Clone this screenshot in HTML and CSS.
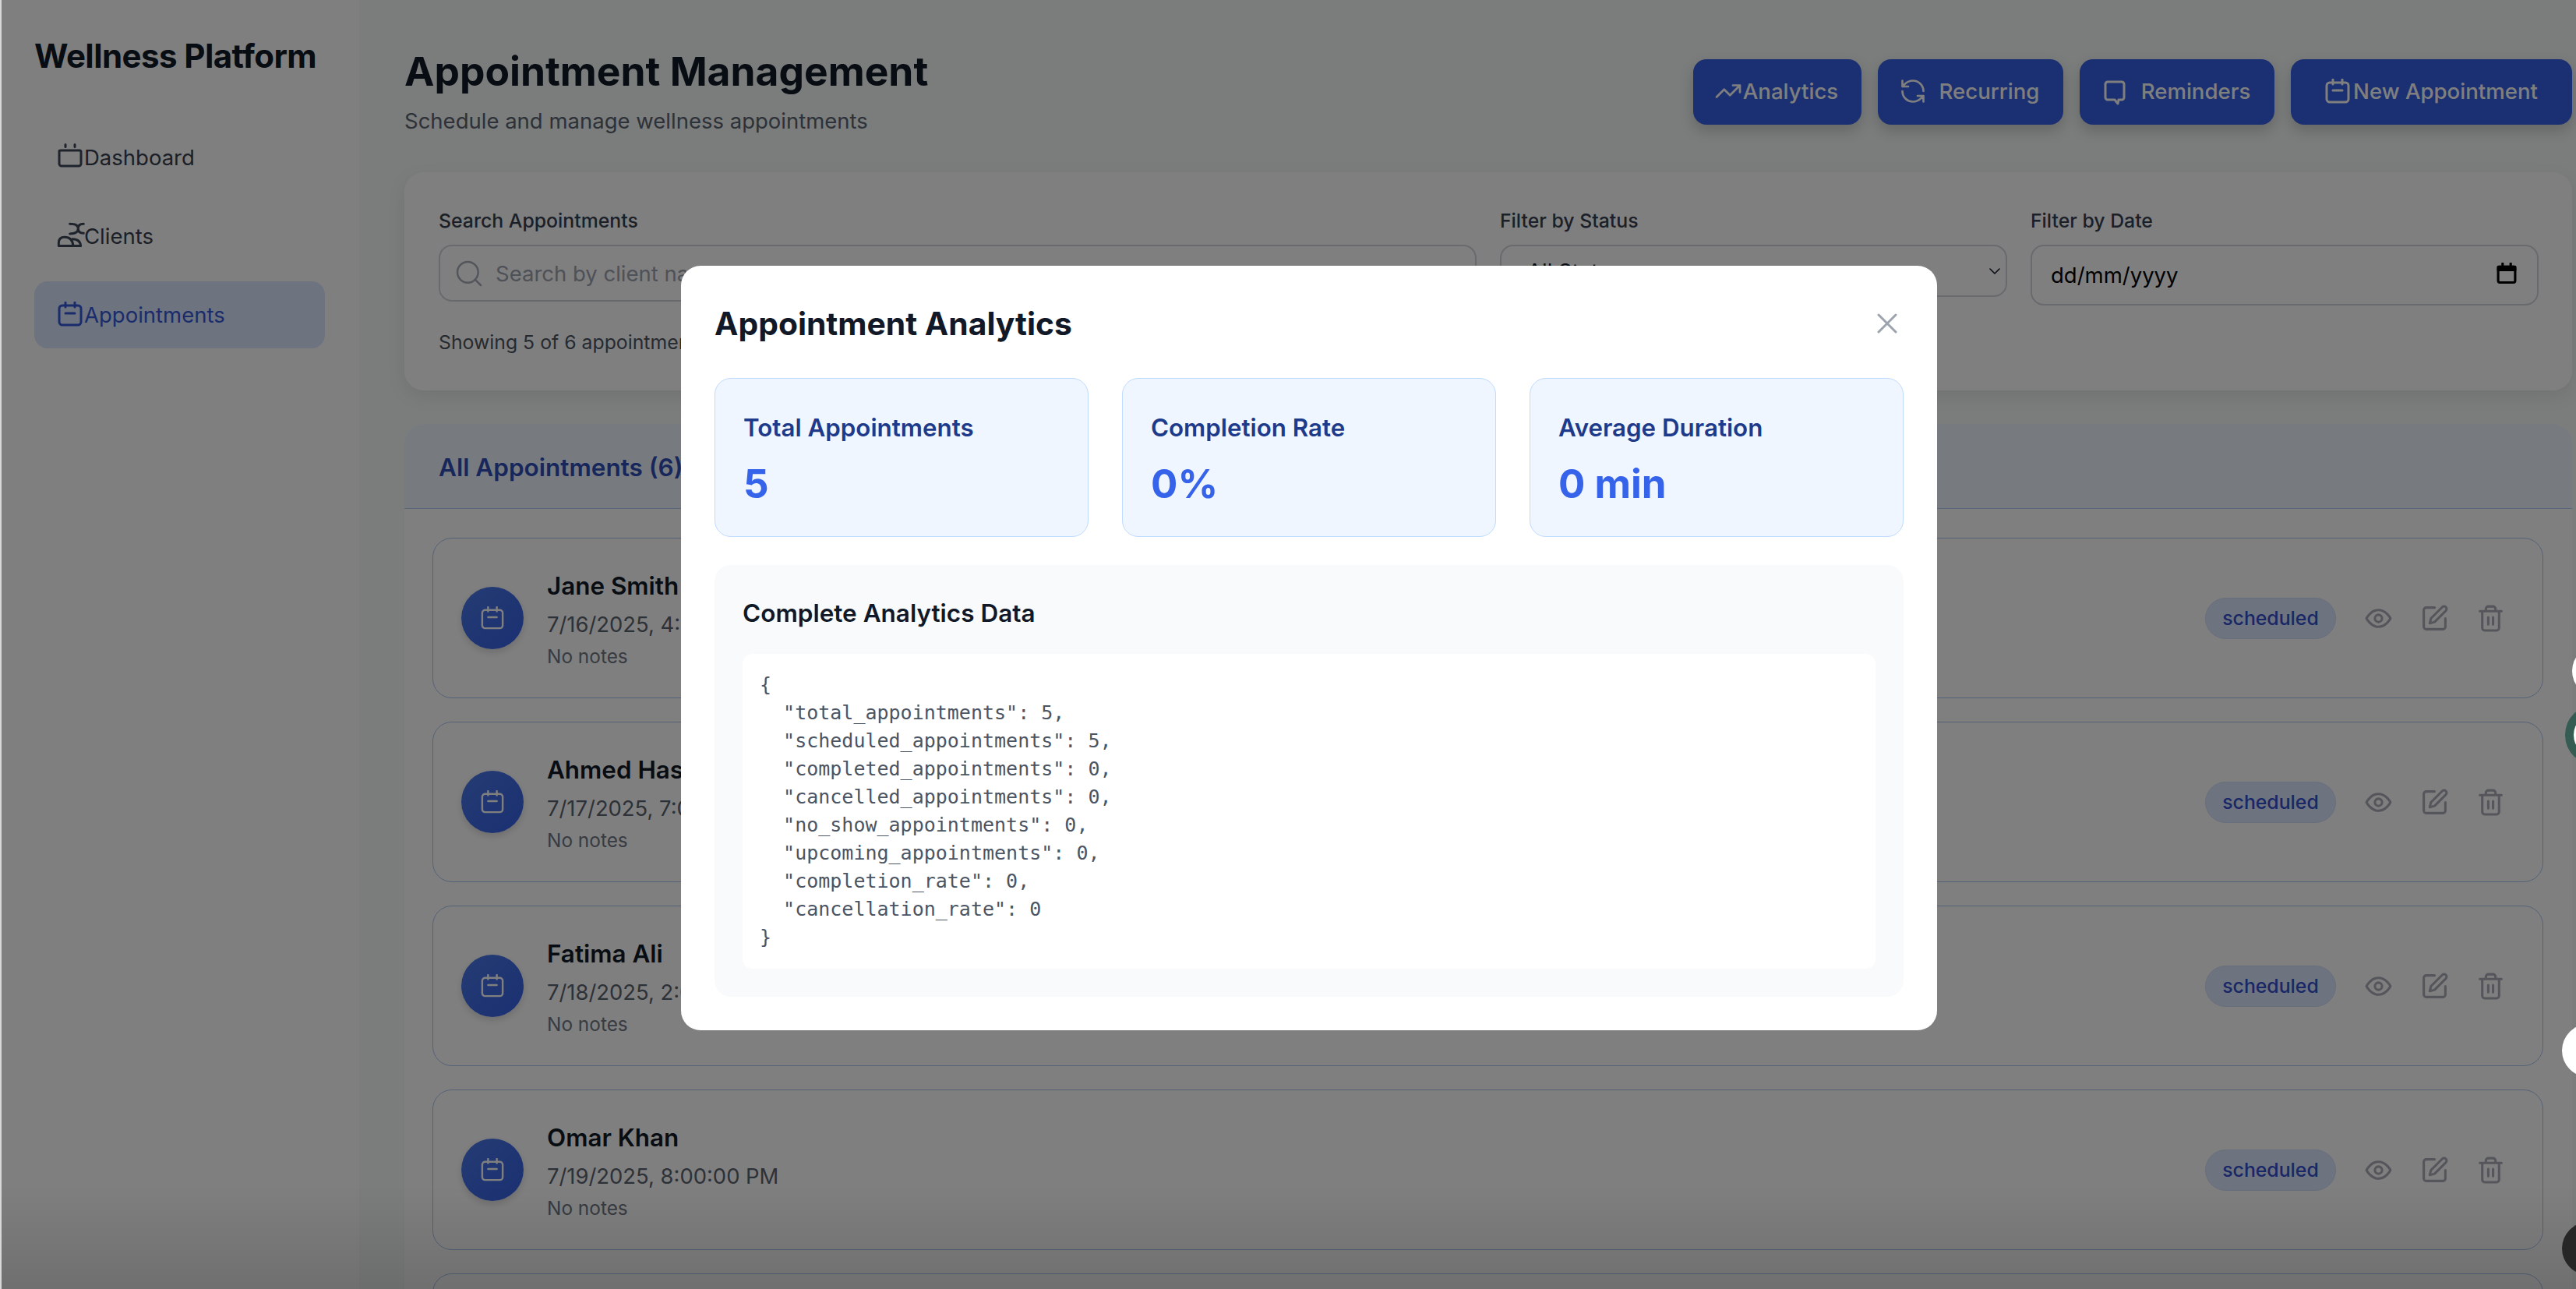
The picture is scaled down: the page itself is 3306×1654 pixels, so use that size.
FILE: index.html
```html
<!DOCTYPE html>
<html lang="en">
<head>
    <meta charset="UTF-8">
    <title>Wellness Platform - Appointments</title>
    <link rel="stylesheet" href="styles.css">
</head>
<body>
    <svg class="icon-defs" width="0" height="0">
        <defs>
            <symbol id="cal" viewBox="0 0 32 32">
                <rect x="2" y="5" width="28" height="25" rx="4"></rect>
                <path d="M10 1v6M22 1v6M10 15h12"></path>
            </symbol>
        </defs>
    </svg>

    <div class="app">
        <aside class="sidebar">
            <h2 class="brand">Wellness Platform</h2>
            <nav class="nav">
                <a class="nav-item">
                    <svg class="nav-icon" viewBox="0 0 32 32"><path d="M2 9.500 4 9h24.500a2 2 0 0 1 1.500 2v15a3 3 0 0 1-3 3H5a3 3 0 0 1-3-3zM10 1.500v3M22 1.500v3"></path></svg>
                    <span>Dashboard</span>
                </a>
                <a class="nav-item">
                    <svg class="nav-icon nav-icon-clients" viewBox="40 345 110 100"><path d="M47 437h85M47 437v-12q0-22 23-22 30 0 33 34M100 410q30 0 32 27M90 352q32 0 32 18 0 20-32 20M143 352q-21 0-21 18 0 18 21 18"></path></svg>
                    <span>Clients</span>
                </a>
                <a class="nav-item nav-item-active">
                    <svg class="nav-icon"><use href="#cal"></use></svg>
                    <span>Appointments</span>
                </a>
            </nav>
        </aside>

        <main class="main">
            <header class="page-head">
                <div>
                    <h1 class="page-title">Appointment Management</h1>
                    <p class="page-sub">Schedule and manage wellness appointments</p>
                </div>
                <div class="head-actions">
                    <button class="btn btn-analytics">
                        <svg class="btn-icon" viewBox="0 0 24 24"><path d="M22 7l-8.500 8.500-5-5L2 17M16 7h6v6"></path></svg>
                        <span>Analytics</span>
                    </button>
                    <button class="btn btn-recurring">
                        <svg class="btn-icon" viewBox="0 0 24 24"><path d="M21 12a9 9 0 0 0-9-9 9.750 9.750 0 0 0-6.740 2.740L3 8M3 3v5h5M3 12a9 9 0 0 0 9 9 9.750 9.750 0 0 0 6.740-2.740L21 16M16 16h5v5"></path></svg>
                        <span>Recurring</span>
                    </button>
                    <button class="btn btn-reminders">
                        <svg class="btn-icon-bubble" viewBox="0 0 28 32"><path d="M5 2h18a3 3 0 0 1 3 3v17a3 3 0 0 1-3 3h-4l-1 5-4-5H5a3 3 0 0 1-3-3V5a3 3 0 0 1 3-3z"></path></svg>
                        <span>Reminders</span>
                    </button>
                    <button class="btn btn-new">
                        <svg class="btn-icon-cal"><use href="#cal"></use></svg>
                        <span>New Appointment</span>
                    </button>
                </div>
            </header>

            <section class="filter-card">
                <div class="filter-grid">
                    <div>
                        <label class="field-label">Search Appointments</label>
                        <div class="search-box">
                            <svg class="search-icon" viewBox="0 0 24 24"><circle cx="11" cy="11" r="8"></circle><path d="M21 21l-4.300-4.300"></path></svg>
                            <span class="placeholder">Search by client name or notes...</span>
                        </div>
                    </div>
                    <div>
                        <label class="field-label">Filter by Status</label>
                        <div class="select-box">
                            <span>All Status</span>
                            <svg class="chevron" viewBox="0 0 16 10"><path d="M2 2l6 6 6-6"></path></svg>
                        </div>
                    </div>
                    <div>
                        <label class="field-label">Filter by Date</label>
                        <div class="date-box">
                            <span>dd/mm/yyyy</span>
                            <svg class="date-icon" viewBox="0 0 24 26"><rect x="1.500" y="5" width="21" height="19.500" rx="2"></rect><path class="date-head" d="M1.500 5h21v4h-21zM7 1v4M17 1v4"></path></svg>
                        </div>
                    </div>
                </div>
                <p class="filter-count">Showing 5 of 6 appointments</p>
            </section>

            <section class="list-card">
                <div class="list-head">All Appointments (6)</div>
                <div class="list-body">
                    <article class="appt">
                        <div class="appt-avatar"><svg class="avatar-icon"><use href="#cal"></use></svg></div>
                        <div class="appt-info">
                            <div class="appt-name">Jane Smith</div>
                            <div class="appt-date">7/16/2025, 4:00:00 PM</div>
                            <div class="appt-notes">No notes</div>
                        </div>
                        <span class="badge">scheduled</span>
                        <div class="appt-actions">
                            <svg class="act-icon" viewBox="0 0 24 24"><path d="M2 12s3.600-7 10-7 10 7 10 7-3.600 7-10 7-10-7-10-7z"></path><circle cx="12" cy="12" r="3"></circle></svg>
                            <svg class="act-icon" viewBox="0 0 24 24"><path d="M12 3H5a2 2 0 0 0-2 2v14a2 2 0 0 0 2 2h14a2 2 0 0 0 2-2v-7"></path><path d="M18.400 2.600a2.100 2.100 0 1 1 3 3L12 15l-4 1 1-4z"></path></svg>
                            <svg class="act-icon" viewBox="0 0 24 24"><path d="M3 6h18M19 6v14a2 2 0 0 1-2 2H7a2 2 0 0 1-2-2V6M8 6V4a2 2 0 0 1 2-2h4a2 2 0 0 1 2 2v2M10 11v6M14 11v6"></path></svg>
                        </div>
                    </article>
                    <article class="appt">
                        <div class="appt-avatar"><svg class="avatar-icon"><use href="#cal"></use></svg></div>
                        <div class="appt-info">
                            <div class="appt-name">Ahmed Hassan</div>
                            <div class="appt-date">7/17/2025, 7:00:00 PM</div>
                            <div class="appt-notes">No notes</div>
                        </div>
                        <span class="badge">scheduled</span>
                        <div class="appt-actions">
                            <svg class="act-icon" viewBox="0 0 24 24"><path d="M2 12s3.600-7 10-7 10 7 10 7-3.600 7-10 7-10-7-10-7z"></path><circle cx="12" cy="12" r="3"></circle></svg>
                            <svg class="act-icon" viewBox="0 0 24 24"><path d="M12 3H5a2 2 0 0 0-2 2v14a2 2 0 0 0 2 2h14a2 2 0 0 0 2-2v-7"></path><path d="M18.400 2.600a2.100 2.100 0 1 1 3 3L12 15l-4 1 1-4z"></path></svg>
                            <svg class="act-icon" viewBox="0 0 24 24"><path d="M3 6h18M19 6v14a2 2 0 0 1-2 2H7a2 2 0 0 1-2-2V6M8 6V4a2 2 0 0 1 2-2h4a2 2 0 0 1 2 2v2M10 11v6M14 11v6"></path></svg>
                        </div>
                    </article>
                    <article class="appt">
                        <div class="appt-avatar"><svg class="avatar-icon"><use href="#cal"></use></svg></div>
                        <div class="appt-info">
                            <div class="appt-name">Fatima Ali</div>
                            <div class="appt-date">7/18/2025, 2:00:00 PM</div>
                            <div class="appt-notes">No notes</div>
                        </div>
                        <span class="badge">scheduled</span>
                        <div class="appt-actions">
                            <svg class="act-icon" viewBox="0 0 24 24"><path d="M2 12s3.600-7 10-7 10 7 10 7-3.600 7-10 7-10-7-10-7z"></path><circle cx="12" cy="12" r="3"></circle></svg>
                            <svg class="act-icon" viewBox="0 0 24 24"><path d="M12 3H5a2 2 0 0 0-2 2v14a2 2 0 0 0 2 2h14a2 2 0 0 0 2-2v-7"></path><path d="M18.400 2.600a2.100 2.100 0 1 1 3 3L12 15l-4 1 1-4z"></path></svg>
                            <svg class="act-icon" viewBox="0 0 24 24"><path d="M3 6h18M19 6v14a2 2 0 0 1-2 2H7a2 2 0 0 1-2-2V6M8 6V4a2 2 0 0 1 2-2h4a2 2 0 0 1 2 2v2M10 11v6M14 11v6"></path></svg>
                        </div>
                    </article>
                    <article class="appt">
                        <div class="appt-avatar"><svg class="avatar-icon"><use href="#cal"></use></svg></div>
                        <div class="appt-info">
                            <div class="appt-name">Omar Khan</div>
                            <div class="appt-date">7/19/2025, 8:00:00 PM</div>
                            <div class="appt-notes">No notes</div>
                        </div>
                        <span class="badge">scheduled</span>
                        <div class="appt-actions">
                            <svg class="act-icon" viewBox="0 0 24 24"><path d="M2 12s3.600-7 10-7 10 7 10 7-3.600 7-10 7-10-7-10-7z"></path><circle cx="12" cy="12" r="3"></circle></svg>
                            <svg class="act-icon" viewBox="0 0 24 24"><path d="M12 3H5a2 2 0 0 0-2 2v14a2 2 0 0 0 2 2h14a2 2 0 0 0 2-2v-7"></path><path d="M18.400 2.600a2.100 2.100 0 1 1 3 3L12 15l-4 1 1-4z"></path></svg>
                            <svg class="act-icon" viewBox="0 0 24 24"><path d="M3 6h18M19 6v14a2 2 0 0 1-2 2H7a2 2 0 0 1-2-2V6M8 6V4a2 2 0 0 1 2-2h4a2 2 0 0 1 2 2v2M10 11v6M14 11v6"></path></svg>
                        </div>
                    </article>
                    <article class="appt"></article>
                </div>
            </section>
        </main>
    </div>

    <div class="overlay">
        <div class="modal">
            <div class="modal-head">
                <h2 class="modal-title">Appointment Analytics</h2>
                <svg class="modal-close" viewBox="0 0 26 26"><path d="M2 2l22 22M24 2L2 24"></path></svg>
            </div>
            <div class="stat-grid">
                <div class="stat">
                    <div class="stat-label">Total Appointments</div>
                    <div class="stat-value">5</div>
                </div>
                <div class="stat">
                    <div class="stat-label">Completion Rate</div>
                    <div class="stat-value">0%</div>
                </div>
                <div class="stat">
                    <div class="stat-label">Average Duration</div>
                    <div class="stat-value">0 min</div>
                </div>
            </div>
            <div class="data-panel">
                <h3 class="data-title">Complete Analytics Data</h3>
                <pre class="data-code">{
  "total_appointments": 5,
  "scheduled_appointments": 5,
  "completed_appointments": 0,
  "cancelled_appointments": 0,
  "no_show_appointments": 0,
  "upcoming_appointments": 0,
  "completion_rate": 0,
  "cancellation_rate": 0
}</pre>
            </div>
        </div>
    </div>

    <!-- floating widgets that stick out from the right edge -->
    <div class="float-dot dot-white-a"></div>
    <div class="float-dot dot-green"></div>
    <div class="float-dot dot-white-b"></div>
    <div class="float-dot dot-dark"></div>
</body>
</html>
```

FILE: styles.css
```css
* {
    box-sizing: border-box;
}

html, body {
    margin: 0;
    height: 100%;
    overflow: hidden;
}

body {
    font-family: "Inter", "Liberation Sans", sans-serif;
    background-color: #f6faf8;
    color: #111827;
}

.icon-defs {
    position: absolute;
}

svg {
    fill: none;
    stroke: currentColor;
    stroke-linecap: round;
    stroke-linejoin: round;
    flex-shrink: 0;
}

.app {
    display: flex;
    height: 100%;
}

/* sidebar */
.sidebar {
    width: 461px;
    flex-shrink: 0;
    padding: 44px;
    background-color: #fff;
}

.brand {
    margin: 0 0 59px;
    font-size: 42px;
    line-height: 56px;
    font-weight: 700;
    letter-spacing: -0.57px;
}

.nav {
    display: flex;
    flex-direction: column;
    gap: 15px;
}

.nav-item {
    display: flex;
    align-items: center;
    gap: 2px;
    height: 86px;
    padding-left: 30px;
    border-radius: 17px;
    font-size: 27.5px;
    color: #374151;
}

.nav-item-active {
    background-color: #dbe6ff;
    color: #3458d8;
}

.nav-icon {
    width: 32px;
    height: 32px;
    stroke-width: 3;
    margin-top: -4px;
    color: #3c4658;
}

.nav-item-active .nav-icon {
    margin-top: -2px;
    color: #3458d8;
}

.nav-icon-clients {
    width: 36.6px;
    height: 33.3px;
    margin: -2px -3.6px 0 -1px;
    stroke-width: 9;
}

/* page header */
.main {
    flex: 1;
    min-width: 0;
    padding: 55px 5px 0 58px;
}

.page-head {
    display: flex;
    justify-content: space-between;
    align-items: flex-start;
    margin-bottom: 44px;
}

.page-title {
    margin: 0;
    font-size: 51.5px;
    line-height: 72px;
    font-weight: 700;
}

.page-sub {
    margin: 6px 0 0;
    font-size: 27.5px;
    line-height: 44px;
    color: #5b6270;
}

.head-actions {
    display: flex;
    gap: 21px;
    margin-top: 21px;
}

.btn {
    display: flex;
    align-items: center;
    justify-content: center;
    height: 84px;
    padding: 0 0 3px;
    border: none;
    border-radius: 17px;
    background-color: #3660e4;
    color: #fff;
    font-family: inherit;
    font-size: 27.6px;
    font-weight: 500;
    box-shadow: 0 8px 18px rgba(0, 0, 0, 0.18);
}

.btn-analytics { width: 216px; gap: 4px; }
.btn-recurring { width: 238px; gap: 20px; }
.btn-reminders { width: 250px; gap: 20px; }
.btn-new { width: 361px; gap: 4px; }

.btn-icon {
    width: 36px;
    height: 36px;
    stroke-width: 1.8;
}

.btn-analytics .btn-icon {
    margin: 0 -3px;
}

.btn-recurring .btn-icon {
    margin: 0 -4px;
}

.btn-icon-bubble {
    width: 28px;
    height: 32px;
    stroke-width: 3;
    margin-top: 4px;
}

.btn-icon-cal {
    width: 32px;
    height: 32px;
    stroke-width: 3;
}

/* filter card */
.filter-card {
    padding: 43px 43px 43px 44px;
    border-radius: 25px;
    background-color: #fff;
    box-shadow: 0 8px 24px rgba(0, 0, 0, 0.08);
    margin-bottom: 43px;
}

.filter-grid {
    display: grid;
    grid-template-columns: 1fr 651px 652px;
    gap: 30px;
    align-items: start;
}

.field-label {
    display: block;
    margin-bottom: 12px;
    font-size: 24.8px;
    line-height: 38px;
    font-weight: 500;
    color: #374151;
}

.search-box,
.select-box,
.date-box {
    display: flex;
    align-items: center;
    border: 2px solid #d1d5db;
    border-radius: 17px;
    font-size: 27.5px;
}

.search-box {
    gap: 18px;
    height: 73px;
    padding-left: 21px;
    overflow: hidden;
    color: #9ca3af;
}

.search-icon {
    width: 40px;
    height: 40px;
    margin: 0 -4px;
    stroke-width: 1.5;
    color: #a4abb7;
}

.select-box {
    justify-content: space-between;
    height: 67px;
    padding: 0 6px 0 33px;
    color: #111827;
}

.chevron {
    width: 16px;
    height: 10px;
    stroke-width: 1.6;
}

.date-box {
    justify-content: space-between;
    height: 78px;
    padding: 0 26px 0 24px;
    color: #000;
}

.date-icon {
    width: 26px;
    height: 27px;
    margin-top: -6px;
    stroke-width: 3;
}

.date-head {
    fill: currentColor;
}

.filter-count {
    margin: 28px 0 0;
    font-size: 24.8px;
    line-height: 38px;
    color: #4b5563;
}

/* appointments list */
.list-card {
    border-radius: 25px 25px 0 0;
    background-color: #fff;
    overflow: hidden;
}

.list-head {
    display: flex;
    align-items: center;
    height: 109px;
    padding: 3px 0 0 44px;
    border-bottom: 1px solid #b4cdf5;
    background-color: #eff6ff;
    color: #2f4fb8;
    font-size: 31.5px;
    font-weight: 600;
}

.list-body {
    display: flex;
    flex-direction: column;
    gap: 30px;
    padding: 37px 37px 0 36px;
}

.appt {
    display: flex;
    align-items: center;
    flex-shrink: 0;
    height: 206px;
    padding: 0 48px 0 36px;
    border: 1px solid #a9c2ee;
    border-radius: 25px;
}

.appt-avatar {
    display: flex;
    align-items: center;
    justify-content: center;
    width: 80px;
    height: 80px;
    border-radius: 50%;
    background: linear-gradient(135deg, #4a78e8, #3660e4);
    color: #fff;
    box-shadow: 0 4px 10px rgba(0, 0, 0, 0.15);
}

.avatar-icon {
    width: 30px;
    height: 30px;
    stroke-width: 2.6;
}

.appt-info {
    flex: 1;
    margin-left: 30px;
    padding-top: 4px;
}

.appt-name {
    font-size: 31.4px;
    line-height: 44px;
    font-weight: 600;
}

.appt-date {
    margin-top: 6px;
    font-size: 27.4px;
    line-height: 42px;
    color: #5b6270;
}

.appt-notes {
    margin-top: 2px;
    font-size: 24.4px;
    line-height: 36px;
    color: #707682;
}

.badge {
    display: flex;
    align-items: center;
    justify-content: center;
    width: 168px;
    height: 53px;
    border: 1px solid #cfdcf8;
    border-radius: 27px;
    background-color: #dbe6ff;
    color: #324fcc;
    font-size: 24.8px;
    font-weight: 500;
}

.appt-actions {
    display: flex;
    gap: 35px;
    margin-left: 36px;
    color: #a9adb8;
}

.act-icon {
    width: 37px;
    height: 37px;
    stroke-width: 2;
}

/* analytics modal */
.overlay {
    position: fixed;
    inset: 0;
    z-index: 10;
    display: flex;
    align-items: flex-start;
    justify-content: flex-start;
    padding: 341px 0 0 874px;
    background: linear-gradient(rgba(0, 0, 0, 0) 92%, rgba(0, 0, 0, 0.12)), rgba(0, 0, 0, 0.5);
    border-left: 2px solid #d8d8d8;
}

.modal {
    width: 1612px;
    height: 981px;
    margin-left: -2px;
    padding: 42px 43px;
    border-radius: 25px;
    background-color: #fff;
}

.modal-head {
    display: flex;
    justify-content: space-between;
    align-items: center;
    height: 64px;
    margin-bottom: 38px;
}

.modal-title {
    margin: 0;
    font-size: 40.8px;
    font-weight: 700;
}

.modal-close {
    width: 26px;
    height: 26px;
    margin-right: 8px;
    stroke-width: 3;
    color: #9ca3af;
}

.stat-grid {
    display: grid;
    grid-template-columns: repeat(3, 1fr);
    gap: 43px;
    margin-bottom: 36px;
}

.stat {
    height: 204px;
    padding: 41px 36px 0;
    border: 1px solid #bfdbfe;
    border-radius: 21px;
    background-color: #eff6ff;
}

.stat-label {
    font-size: 31.3px;
    line-height: 44px;
    font-weight: 600;
    color: #1e3a8a;
}

.stat-value {
    margin-top: 15px;
    font-size: 51px;
    line-height: 70px;
    font-weight: 700;
    color: #3563e9;
}

.data-panel {
    height: 554px;
    padding: 37px 36px 36px 36px;
    border-radius: 21px;
    background-color: #f9fafb;
}

.data-title {
    margin: 0 0 27px;
    font-size: 31.5px;
    line-height: 50px;
    font-weight: 600;
}

.data-code {
    height: 404px;
    margin: 0;
    padding: 22px;
    border-radius: 13px;
    background-color: #fff;
    font-family: "DejaVu Sans Mono", "Liberation Mono", monospace;
    font-size: 25px;
    line-height: 36px;
    color: #4b5563;
}

/* floating widgets */
.float-dot {
    position: fixed;
    z-index: 20;
    border-radius: 50%;
}

.dot-white-a {
    left: 3301px;
    top: 828px;
    width: 66px;
    height: 66px;
    background-color: #fff;
}

.dot-green {
    left: 3292px;
    top: 904px;
    width: 78px;
    height: 78px;
    border: 11px solid #355c52;
    background-color: #fff;
}

.dot-white-b {
    left: 3288px;
    top: 1314px;
    width: 68px;
    height: 68px;
    background-color: #fff;
}

.dot-dark {
    left: 3288px;
    top: 1568px;
    width: 68px;
    height: 68px;
    background-color: #262626;
}
```
